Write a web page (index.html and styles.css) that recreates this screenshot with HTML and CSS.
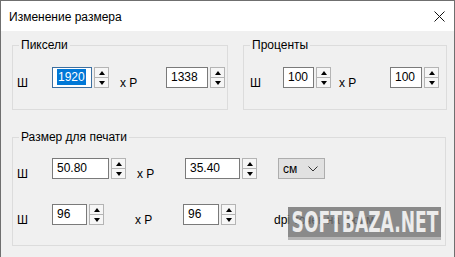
FILE: index.html
```html
<!DOCTYPE html>
<html lang="ru">
<head>
  <meta charset="UTF-8" />
  <title>Изменение размера</title>
  <link rel="stylesheet" href="styles.css">
</head>
<body>
  <div class="window">
    <div class="titlebar">
      <span class="title">Изменение размера</span>
      <svg class="close" width="11" height="11" viewBox="0 0 11 11">
        <path d="M0.5 0.5 L10.5 10.5 M10.5 0.5 L0.5 10.5" stroke="#111" stroke-width="1" fill="none"/>
      </svg>
    </div>

    <div class="client">
      <div class="top-row">
        <fieldset class="group group-pixels">
          <legend>Пиксели</legend>
          <div class="row">
            <span class="lbl lbl-w">Ш</span>
            <div class="field w40 focused"><span class="sel">1920</span></div>
            <div class="spin"><span class="up"></span><span class="down"></span></div>
            <span class="lbl lbl-h">x P</span>
            <div class="field w42">1338</div>
            <div class="spin"><span class="up"></span><span class="down"></span></div>
          </div>
        </fieldset>

        <fieldset class="group group-percent">
          <legend>Проценты</legend>
          <div class="row">
            <span class="lbl lbl-w2">Ш</span>
            <div class="field w31">100</div>
            <div class="spin"><span class="up"></span><span class="down"></span></div>
            <span class="lbl lbl-h2">x P</span>
            <div class="field w32">100</div>
            <div class="spin"><span class="up"></span><span class="down"></span></div>
          </div>
        </fieldset>
      </div>

      <fieldset class="group group-print">
        <legend>Размер для печати</legend>
        <div class="row">
          <span class="lbl lbl-w">Ш</span>
          <div class="field w57">50.80</div>
          <div class="spin"><span class="up"></span><span class="down"></span></div>
          <span class="lbl lbl-h3">x P</span>
          <div class="field w55">35.40</div>
          <div class="spin"><span class="up"></span><span class="down"></span></div>
          <div class="combo">см
            <svg width="10" height="6" viewBox="0 0 10 6"><path d="M0.5 0.5 L5 5 L9.5 0.5" stroke="#333" fill="none"/></svg>
          </div>
        </div>
        <div class="row row2">
          <span class="lbl lbl-w">Ш</span>
          <div class="field w35">96</div>
          <div class="spin"><span class="up"></span><span class="down"></span></div>
          <span class="lbl lbl-h4">x P</span>
          <div class="field w36">96</div>
          <div class="spin"><span class="up"></span><span class="down"></span></div>
          <span class="lbl lbl-dpi">dpi точек на дюйм</span>
          <div class="watermark"><span>SOFTBAZA.NET</span></div>
        </div>
      </fieldset>
    </div>
  </div>
</body>
</html>
```

FILE: styles.css
```css
body {
  margin: 0;
  font-family: 'Liberation Sans', Arial, sans-serif;
  font-size: 12px;
  color: #000;
  background: #fff;
}

.window {
  width: 455px;
  height: 257px;
  box-sizing: border-box;
  border: 1px solid #6f6f6f;
  border-bottom: none;
  overflow: hidden;
  display: flex;
  flex-direction: column;
}

.titlebar {
  height: 30px;
  background: #fff;
  display: flex;
  align-items: center;
  justify-content: space-between;
  padding: 0 9px 0 8px;
  flex-shrink: 0;
}

.title {
  font-size: 12px;
  margin-top: 2px;
}

.close {
  margin-top: 1px;
}

.client {
  flex: 1;
  background: #f0f0f0;
  padding-top: 7px;
}

.top-row {
  display: flex;
  gap: 15px;
  padding-left: 11px;
}

.group {
  margin: 0;
  padding: 0;
  box-sizing: border-box;
  border: 1px solid #dcdcdc;
  min-width: 0;
}

.group legend {
  padding: 0 2px;
  margin-left: 6px;
  line-height: 14px;
}

.group-pixels {
  width: 216px;
  height: 72px;
}

.group-percent {
  width: 204px;
  height: 72px;
}

.group-print {
  width: 434px;
  height: 116px;
  margin: 20px 0 0 11px;
}

.row {
  display: flex;
  align-items: flex-start;
  margin-top: 15px;
  position: relative;
}

.row2 {
  margin-top: 23px;
}

.group-print .row:first-of-type {
  margin-top: 14px;
}

.lbl {
  line-height: 14px;
  margin-top: 9px;
  white-space: nowrap;
}

.lbl-w { width: 35px; padding-left: 4px; }
.lbl-w2 { width: 33px; padding-left: 6px; }
.lbl-h { width: 46px; margin-left: 11px; }
.lbl-h2 { width: 51px; margin-left: 8px; }
.lbl-h3 { width: 48px; margin-left: 11px; }
.lbl-h4 { width: 48px; margin-left: 31px; }
.lbl-dpi { margin-left: 38px; }

.field {
  height: 21px;
  box-sizing: border-box;
  background: #fff;
  border: 1px solid #7a7a7a;
  padding-left: 4px;
  line-height: 19px;
}

.focused {
  border-color: #3c6fa0;
}

.sel {
  background: #0078d7;
  color: #fff;
  padding: 1px 1px;
}

.w31 { width: 31px; }
.w32 { width: 32px; }
.w35 { width: 35px; }
.w36 { width: 36px; }
.w40 { width: 40px; }
.w42 { width: 42px; }
.w55 { width: 55px; }
.w57 { width: 57px; }

.spin {
  width: 15px;
  height: 21px;
  display: flex;
  flex-direction: column;
  margin-left: 2px;
}

.spin span {
  flex: 1;
  box-sizing: border-box;
  border: 1px solid #b4b4b4;
  background: #f6f6f6;
  display: flex;
  align-items: center;
  justify-content: center;
}

.spin .down {
  border-top: none;
}

.spin .up::after,
.spin .down::after {
  content: "";
  border-left: 3px solid transparent;
  border-right: 3px solid transparent;
}

.spin .up::after {
  border-bottom: 4px solid #000;
}

.spin .down::after {
  border-top: 4px solid #000;
}

.combo {
  width: 47px;
  height: 21px;
  box-sizing: border-box;
  margin-left: 21px;
  background: #e1e1e1;
  border: 1px solid #adadad;
  display: flex;
  align-items: center;
  justify-content: space-between;
  padding: 0 6px 0 4px;
}

.watermark {
  position: absolute;
  left: 275px;
  top: 3px;
  width: 153px;
  height: 33px;
  background: rgba(115, 115, 115, 0.82);
  border-bottom: 3px solid #b5b5b5;
  box-sizing: border-box;
  display: flex;
  align-items: center;
  justify-content: center;
  overflow: hidden;
}

.watermark span {
  font-family: 'DejaVu Sans Condensed', 'DejaVu Sans', sans-serif;
  font-weight: bold;
  font-size: 28px;
  color: #ececec;
  transform: scaleX(0.68);
  white-space: nowrap;
}
```
